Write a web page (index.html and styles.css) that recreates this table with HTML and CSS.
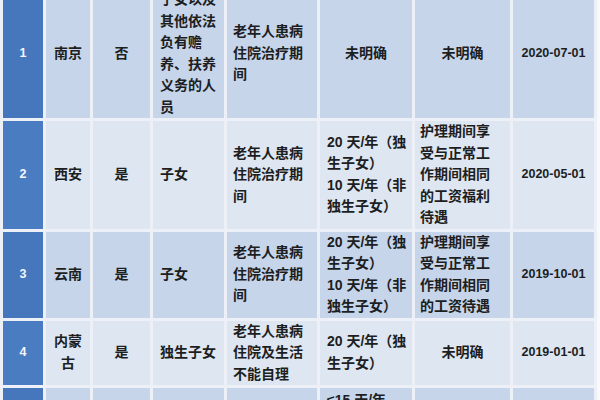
FILE: index.html
```html
<!DOCTYPE html>
<html lang="zh-CN">
<head>
<meta charset="utf-8">
<title>独生子女护理假</title>
<link rel="stylesheet" href="styles.css">
</head>
<body>
<table class="sheet">
  <colgroup>
    <col class="c-no"><col class="c-city"><col class="c-yn"><col class="c-who"><col class="c-when"><col class="c-days"><col class="c-pay"><col class="c-date">
  </colgroup>
  <tbody>
    <tr class="odd">
      <td class="no">1</td>
      <td class="mid">南京</td>
      <td class="mid">否</td>
      <td class="who">子女以及其他依法负有赡养、扶养义务的人员</td>
      <td class="when">老年人患病住院治疗期间</td>
      <td class="mid">未明确</td>
      <td class="mid">未明确</td>
      <td class="date">2020-07-01</td>
    </tr>
    <tr class="even">
      <td class="no">2</td>
      <td class="mid">西安</td>
      <td class="mid">是</td>
      <td class="who">子女</td>
      <td class="when">老年人患病住院治疗期间</td>
      <td class="days">20 天/年（独生子女）<br>10 天/年（非独生子女）</td>
      <td class="pay">护理期间享受与正常工作期间相同的工资福利待遇</td>
      <td class="date">2020-05-01</td>
    </tr>
    <tr class="odd">
      <td class="no">3</td>
      <td class="mid">云南</td>
      <td class="mid">是</td>
      <td class="who">子女</td>
      <td class="when">老年人患病住院治疗期间</td>
      <td class="days">20 天/年（独生子女）<br>10 天/年（非独生子女）</td>
      <td class="pay">护理期间享受与正常工作期间相同的工资待遇</td>
      <td class="date">2019-10-01</td>
    </tr>
    <tr class="even">
      <td class="no">4</td>
      <td class="mid">内蒙古</td>
      <td class="mid">是</td>
      <td class="who">独生子女</td>
      <td class="when">老年人患病住院及生活不能自理</td>
      <td class="days">20 天/年（独生子女）</td>
      <td class="mid">未明确</td>
      <td class="date">2019-01-01</td>
    </tr>
    <tr class="odd">
      <td class="no">5</td>
      <td class="mid"></td>
      <td class="mid"></td>
      <td class="who"></td>
      <td class="when"></td>
      <td class="days top">≤15 天/年（独生子女）<br>≤7 天/年（非独生子女）</td>
      <td class="pay">陪护期间视为出勤，工资待遇不变</td>
      <td class="date"></td>
    </tr>
  </tbody>
</table>
</body>
</html>
```

FILE: styles.css
```css
html, body {
  margin: 0;
  padding: 0;
  background: #f7f9fc;
  overflow: hidden;
}

.sheet {
  width: 597px;
  margin-top: -14px;
  border-collapse: separate;
  border-spacing: 3px;
  background: #edf1f7;
  table-layout: fixed;
  font-family: "Liberation Sans", "Noto Sans CJK SC", sans-serif;
  font-weight: bold;
  font-size: 14px;
  line-height: 21.5px;
  color: #1c1e22;
}

.c-no { width: 40px; }
.c-city { width: 44px; }
.c-yn { width: 57px; }
.c-who { width: 71px; }
.c-when { width: 90px; }
.c-days { width: 92px; }
.c-pay { width: 95px; }
.c-date { width: 81px; }

.sheet td {
  padding: 0;
  vertical-align: middle;
  overflow: hidden;
}

.odd td { background: #c6d5ea; }
.even td { background: #dee6f1; }

.sheet td.no {
  background: #4a7cc1;
  color: #f4f7fb;
  font-size: 12.5px;
  text-align: center;
}
.odd td.no { background: #4676bc; }

.sheet td.mid {
  text-align: center;
  padding: 0 4px;
}

.sheet td.who {
  padding: 0 3px 0 7px;
}

.sheet td.when {
  padding: 0 6px 0 6px;
}

.sheet td.days {
  padding: 0 4px 0 7px;
}

.sheet td.days.top {
  vertical-align: top;
  padding-top: 2px;
}

.sheet td.pay {
  padding: 0 8px 0 5px;
}

.sheet td.date {
  text-align: center;
  font-size: 12.5px;
}
```
